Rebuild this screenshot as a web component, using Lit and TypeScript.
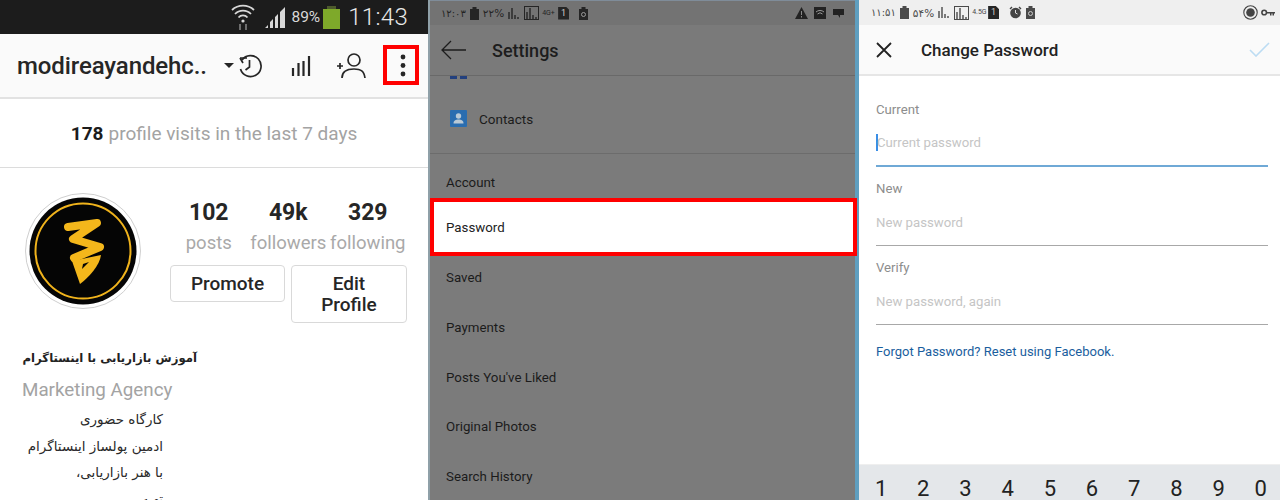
import { LitElement, html, css, svg } from "lit";
import { customElement } from "lit/decorators.js";

const bars = (c: string) => svg`<path d="M1 12V5M4 12V1M7 12V8M10 12v-2" stroke=${c} stroke-width="1.4" fill="none"/>`;

@customElement("app-root")
export class AppRoot extends LitElement {
  static styles = css`
    :host { display: block; width: 1280px; height: 500px; overflow: hidden; font-family: Roboto, "Noto Sans", sans-serif; background: #fff; }
    .page { display: flex; height: 500px; }
    .p1 { width: 428px; flex: none; border-right: 2px solid #8fa0a8; position: relative; display: flex; flex-direction: column; background: #fff; overflow: hidden; box-sizing: content-box; }
    .p2 { width: 425px; flex: none; background: #7b7b7b; display: flex; flex-direction: column; position: relative; z-index: 1; }
    .sep { width: 4px; flex: none; background: #5f9fc0; }
    .p3 { flex: 1; display: flex; flex-direction: column; background: #fff; overflow: hidden; }

    .sb1 { height: 34px; flex: none; background: #1c1c1c; display: flex; align-items: center; justify-content: flex-end; padding-right: 20px; color: #d8d8d8; }
    .sb1 .pct { font-size: 15.5px; margin: 0 3px 0 4px; }
    .sb1 .time { font-size: 24px; font-weight: 300; margin-left: 8px; letter-spacing: .3px; color: #e8e8e8; }
    .batt { width: 17px; height: 20px; background: #7ea92a; position: relative; margin-top: 3px; }
    .batt::before { content: ""; position: absolute; top: -3px; left: 4px; width: 9px; height: 3px; background: #4d5a2c; }
    .sig { margin-left: 10px; }

    .tb1 { height: 63px; flex: none; background: #fafafa; border-bottom: 2px solid #e2e2e2; box-sizing: content-box; display: flex; align-items: center; padding-left: 17px; position: relative; }
    .uname { font-size: 24px; font-weight: 500; color: #262626; width: 205px; white-space: nowrap; letter-spacing: -.1px; }
    .caret { width: 0; height: 0; border-left: 5px solid transparent; border-right: 5px solid transparent; border-top: 5px solid #262626; margin-top: -1px; margin-right: 3px; margin-left: 2px; }
    .tb1 svg { display: block; flex: none; }
    .i-hist { margin-right: 28px; }
    .i-bars { margin-right: 25px; }
    .highlight { position: absolute; left: 383px; top: 11px; width: 36px; height: 40px; border: 4px solid #f00; box-sizing: border-box; display: flex; align-items: center; justify-content: center; padding-left: 4px; }

    .visits { height: 68px; flex: none; border-bottom: 1px solid #dcdcdc; display: flex; align-items: center; justify-content: center; font-size: 19px; color: #a3a3a3; box-sizing: content-box; }
    .visits b { color: #1c1c1c; font-weight: 700; margin-right: 5px; }

    .profile { display: flex; flex: none; padding: 0 0 0 25px; height: 157px; box-sizing: border-box; }
    .avatar { width: 116px; height: 116px; flex: none; margin: 25px 28px 0 0; }
    .right { width: 240px; display: flex; flex-direction: column; margin-top: 32px; }
    .stats { display: flex; }
    .stat { display: flex; flex-direction: column; align-items: center; width: 79.5px; }
    .num { font-size: 23px; font-weight: 700; color: #262626; line-height: 28px; margin-top: -1px; }
    .lbl { font-size: 18.5px; color: #a9a9a9; line-height: 22px; margin-top: 5px; white-space: nowrap; }
    .btns { display: flex; gap: 6px; margin-top: 11px; align-items: flex-start; margin-left: 1px; }
    .btn { border: 1px solid #d9d9d9; border-radius: 4px; background: #fff; display: flex; align-items: center; justify-content: center; text-align: center; font-size: 19px; font-weight: 500; color: #262626; box-sizing: border-box; line-height: 21px; }
    .b1 { width: 115px; height: 37px; }
    .b2 { width: 116px; height: 58px; }

    .bio { padding: 0 0 0 22px; display: flex; flex-direction: column; flex: none; }
    .fa { font-family: "DejaVu Sans", sans-serif; direction: rtl; }
    .bio-title { font-size: 11.7px; font-weight: 700; color: #222; width: 175px; white-space: nowrap; text-align: right; line-height: 20px; margin-top: 23px; }
    .cat { font-size: 18.8px; color: #a3a3a3; line-height: 24px; margin-top: 10px; }
    .line { font-size: 13.5px; color: #2a2a2a; width: 141px; white-space: nowrap; text-align: right; line-height: 26.5px; }
    .lines { margin-top: 4px; }

    .sb2 { height: 25px; flex: none; background: #737373; border-top: 1px solid #7f8c99; box-sizing: border-box; display: flex; align-items: center; padding: 0 11px; color: #252525; font-size: 10px; gap: 4px; }
    .sb3 { height: 25px; flex: none; background: #efefef; box-sizing: border-box; display: flex; align-items: center; padding: 0 5px 0 12px; color: #4a4a4a; font-size: 10px; gap: 4px; }
    .sp { flex: 1; }
    .lang { direction: ltr; unicode-bidi: plaintext; font-family: "DejaVu Sans", sans-serif; white-space: nowrap; }
    .pc { font-size: 10.5px; }
    .t7 { font-size: 7px; line-height: 7px; width: 12px; margin-left: -1px; }
    .s2 { width: 2px; }
    .ml2 { margin-left: 2px; }
    .ml3 { margin-left: 3px; }
    .mln { margin-left: -1px; }
    .sim { width: 11px; height: 13px; background: #252525; clip-path: polygon(0 0, 70% 0, 100% 25%, 100% 100%, 0 100%); display: flex; align-items: center; justify-content: center; font-size: 9px; line-height: 1; color: #ccc; }
    .tb2 { height: 51px; flex: none; background: #7a7a7a; border-bottom: 1px solid #696969; box-sizing: border-box; display: flex; align-items: center; padding-left: 11px; font-size: 18px; font-weight: 500; color: #1d1d1d; }
    .tb2 svg { margin-right: 26px; }
    .peek { height: 2px; flex: none; position: relative; }
    .peek i { display: block; position: absolute; left: 20px; top: 0; width: 17px; height: 3px; background: linear-gradient(90deg, #23407e 0 7px, transparent 7px 10px, #23407e 10px); }
    .contacts { display: flex; align-items: center; height: 76px; flex: none; padding: 6px 0 0 20px; box-sizing: border-box; border-bottom: 1px solid #6c6c6c; font-size: 13.5px; color: #1b1b1b; gap: 12px; }
    .menu { display: flex; flex-direction: column; flex: none; }
    .item { height: 49.7px; display: flex; align-items: center; padding-left: 16px; font-size: 13.3px; color: #1b1b1b; flex: none; box-sizing: border-box; }
    .acct { height: 44px; padding-top: 12px; }
    .active { height: 58px; background: #fff; border: 4px solid #f00; padding: 1px 0 0 12px; width: 427px; color: #222; }
    .after { height: 42px; margin-bottom: 4.6px; }

    .tb3 { height: 51px; flex: none; background: #fafafa; border-bottom: 2px solid #e6e6e6; box-sizing: border-box; display: flex; align-items: center; padding: 0 10px 0 17px; font-size: 17px; font-weight: 500; color: #222; }
    .tb3 .x { margin-right: 29px; }
    .tb3 .ttl { padding-top: 1px; }
    .form { padding: 0 12px 0 17px; flex: 1; display: flex; flex-direction: column; }
    .f-lbl { font-size: 13.2px; color: #8d8d8d; line-height: 16px; margin-top: 26px; }
    .f-lbl.next { margin-top: 14px; }
    .f-in { height: 49px; font-size: 13.2px; color: #c5c5c5; border-bottom: 1px solid #a8a8a8; display: flex; align-items: center; box-sizing: border-box; padding-top: 2px; }
    .f-in.on { border-bottom: 2px solid #6fa9d6; }
    .cursor { width: 2px; height: 17px; background: #3a8ee6; flex: none; margin-right: -1px; }
    .forgot { font-size: 13px; color: #1a5e9e; margin-top: 19px; line-height: 16px; }
    .keys { height: 36px; flex: none; background: #e4e7ea; border-top: 1px solid #efefef; box-sizing: border-box; display: grid; grid-template-columns: repeat(10, 42.2px); padding: 0 0 0 1px; }
    .keys span { font-size: 22px; color: #222; text-align: center; line-height: 22px; padding-top: 13px; }
  `;

  private toolbarIcons() {
    return html`
      <svg class="i-hist" width="26" height="28" viewBox="0 0 26 28" fill="none" stroke="#262626" stroke-width="1.7"><path d="M3 6 L6 11 M3 6 H10"/><path d="M5 8 A10.5 10.5 0 1 1 3.5 17"/><path d="M12.5 8v7l-4 3"/></svg>
      <svg class="i-bars" width="20" height="22" viewBox="0 0 20 22" fill="none" stroke="#262626" stroke-width="2.2"><path d="M2 21v-8M7.5 21V8M12.5 21V6M18 21V1"/></svg>
      <svg width="30" height="26" viewBox="0 0 30 26" fill="none" stroke="#262626" stroke-width="1.7"><circle cx="18" cy="7" r="6"/><path d="M6 25c0-7 5-9 12-9s10 2 11 9"/><path d="M1 13h6M4 10v6"/></svg>
      <div class="highlight"><svg width="6" height="23" viewBox="0 0 6 23" fill="#262626"><circle cx="3" cy="3" r="2.4"/><circle cx="3" cy="11.5" r="2.4"/><circle cx="3" cy="20" r="2.4"/></svg></div>`;
  }

  private logo() {
    return html`<svg class="avatar" viewBox="0 0 116 116">
      <circle cx="58" cy="58" r="57.5" fill="#fff" stroke="#cfcfcf"/>
      <circle cx="58" cy="58" r="53.5" fill="#050505"/>
      <circle cx="58" cy="58" r="47.5" fill="none" stroke="#f0b31c" stroke-width="2"/>
      <path d="M43 34 L72 30 L48 46 L75 54 L49 65" fill="none" stroke="#f4b71b" stroke-width="8" stroke-linecap="round" stroke-linejoin="round"/>
      <path d="M47 68 L76 62 C 75 72 64 84 55 91 Z" fill="#f4b71b"/>
      <path d="M57 76 L64 69 L58 71 Z" fill="#050505"/>
    </svg>`;
  }

  private status2() {
    return html`
      <span class="lang">۱۲:۰۳</span>
      <svg width="9" height="13" viewBox="0 0 9 13"><path d="M0 2h9v11H0z" fill="#252525"/><path d="M2.5 0h4v2h-4z" fill="#252525"/></svg>
      <span class="lang pc">۲۲%</span>
      <svg width="12" height="13" viewBox="0 0 12 13">${bars("#252525")}</svg>
      <svg width="15" height="14" viewBox="0 0 15 14"><rect x=".5" y=".5" width="14" height="13" fill="none" stroke="#252525"/><g transform="translate(2 1)">${bars("#252525")}</g></svg>
      <span class="t7">4G+</span>
      <span class="sim">1</span>
      <span class="s2"></span>
      <svg width="9" height="13" viewBox="0 0 9 13"><path d="M0 2h9v11H0z" fill="#252525"/><path d="M2.5 0h4v2h-4z" fill="#252525"/><circle cx="4.5" cy="7.5" r="2" fill="none" stroke="#999"/></svg>
      <span class="sp"></span>
      <svg width="13" height="12" viewBox="0 0 13 12"><path d="M6.5 0L13 12H0z" fill="#222"/><path d="M6.5 4v4M6.5 9v1.5" stroke="#888"/></svg>
      <svg class="ml2" width="12" height="12" viewBox="0 0 12 12"><rect width="12" height="12" fill="#222"/><path d="M2 5a6 6 0 0 1 8 0M3.5 7a3.5 3.5 0 0 1 5 0" stroke="#999" fill="none"/></svg>
      <svg class="ml3" width="11" height="9" viewBox="0 0 11 9"><path d="M0 0h11v6H7v3L5 6H0z" fill="#222"/></svg>`;
  }

  private status3() {
    return html`
      <span class="lang">۱۱:۵۱</span>
      <svg width="9" height="13" viewBox="0 0 9 13"><path d="M0 2h9v11H0z" fill="#4a4a4a"/><path d="M2.5 0h4v2h-4z" fill="#4a4a4a"/></svg>
      <span class="lang pc">۵۴%</span>
      <svg width="12" height="13" viewBox="0 0 12 13">${bars("#4a4a4a")}</svg>
      <svg width="15" height="14" viewBox="0 0 15 14"><rect x=".5" y=".5" width="14" height="13" fill="none" stroke="#4a4a4a"/><g transform="translate(2 1)">${bars("#4a4a4a")}</g></svg>
      <span class="t7">4.5G</span>
      <span class="sim">1</span>
      <span class="s2"></span>
      <svg width="13" height="13" viewBox="0 0 13 13"><circle cx="6.5" cy="7" r="5.3" fill="#444"/><path d="M1 3l2-2M12 3l-2-2" stroke="#444" stroke-width="1.4"/><path d="M6.5 4v3l2 1" stroke="#ddd" fill="none"/></svg>
      <svg width="9" height="13" viewBox="0 0 9 13"><path d="M0 2h9v11H0z" fill="#4a4a4a"/><path d="M2.5 0h4v2h-4z" fill="#4a4a4a"/><circle cx="4.5" cy="7.5" r="2" fill="none" stroke="#ccc"/></svg>
      <span class="sp"></span>
      <svg width="15" height="15" viewBox="0 0 15 15"><circle cx="7.5" cy="7.5" r="6.7" fill="none" stroke="#444" stroke-width="1.1"/><circle cx="7.5" cy="7.5" r="4.3" fill="#444"/></svg>
      <svg class="mln" width="14" height="7" viewBox="0 0 14 7"><circle cx="3.2" cy="3.5" r="2.3" fill="none" stroke="#444" stroke-width="1.6"/><path d="M5 3h9v1.5h-1v2h-1.5v-2h-1v2H9v-2H5z" fill="#444"/></svg>`;
  }

  render() {
    const digits = ["1", "2", "3", "4", "5", "6", "7", "8", "9", "0"];
    const items = ["Saved", "Payments", "Posts You've Liked", "Original Photos", "Search History"];
    return html`<div class="page">
      <section class="p1">
        <div class="sb1">
          <svg width="24" height="28" viewBox="0 0 24 28" fill="none" stroke="#d8d8d8" stroke-width="1.8"><path d="M1 7a16 16 0 0 1 22 0M4 11a11 11 0 0 1 16 0M7.5 14.5a6 6 0 0 1 9 0"/><circle cx="12" cy="18" r="1.6" fill="#d8d8d8" stroke="none"/><path d="M9 21v6M15 21v6" stroke="#888" stroke-width="1.5"/></svg>
          <svg class="sig" width="22" height="24" viewBox="0 0 22 24" fill="#d8d8d8"><path d="M0 23l3-3v3zM5 23v-6l3-3v9zM10 23V12l3-3v14zM15 23V7l5-5v21z"/></svg>
          <span class="pct">89%</span>
          <div class="batt"></div>
          <span class="time">11:43</span>
        </div>
        <div class="tb1">
          <div class="uname">modireayandehc..</div>
          <div class="caret"></div>
          ${this.toolbarIcons()}
        </div>
        <div class="visits"><b>178</b> profile visits in the last 7 days</div>
        <div class="profile">
          ${this.logo()}
          <div class="right">
            <div class="stats">
              <div class="stat"><span class="num">102</span><span class="lbl">posts</span></div>
              <div class="stat"><span class="num">49k</span><span class="lbl">followers</span></div>
              <div class="stat"><span class="num">329</span><span class="lbl">following</span></div>
            </div>
            <div class="btns">
              <div class="btn b1">Promote</div>
              <div class="btn b2">Edit<br />Profile</div>
            </div>
          </div>
        </div>
        <div class="bio">
          <div class="bio-title fa">آموزش بازاریابی با اینستاگرام</div>
          <div class="cat">Marketing Agency</div>
          <div class="lines">
            <div class="line fa">کارگاه حضوری</div>
            <div class="line fa">ادمین پولساز اینستاگرام</div>
            <div class="line fa">با هنر بازاریابی،</div>
            <div class="line fa">تهیه و</div>
          </div>
        </div>
      </section>

      <section class="p2">
        <div class="sb2">${this.status2()}</div>
        <div class="tb2">
          <svg width="25" height="20" viewBox="0 0 25 20" fill="none" stroke="#1d1d1d" stroke-width="1.3"><path d="M25 10H1M10 1l-9 9 9 9"/></svg>
          Settings
        </div>
        <div class="peek"><i></i></div>
        <div class="contacts">
          <svg width="17" height="17" viewBox="0 0 17 17"><rect width="17" height="17" rx="1" fill="#2a6db0"/><circle cx="8.5" cy="6" r="2.7" fill="#b9c9d6"/><path d="M3.5 13.5c0-3 2-4 5-4s5 1 5 4z" fill="#b9c9d6"/></svg>
          <span>Contacts</span>
        </div>
        <div class="menu">
          <div class="item acct">Account</div>
          <div class="item active">Password</div>
          ${items.map((t, i) => html`<div class="item ${i === 0 ? "after" : ""}">${t}</div>`)}
        </div>
      </section>

      <div class="sep"></div>

      <section class="p3">
        <div class="sb3">${this.status3()}</div>
        <div class="tb3">
          <svg class="x" width="16" height="16" viewBox="0 0 16 16" stroke="#222" stroke-width="1.8"><path d="M1 1l14 14M15 1L1 15"/></svg>
          <span class="ttl">Change Password</span>
          <span class="sp"></span>
          <svg width="21" height="15" viewBox="0 0 21 15" fill="none" stroke="#bcdcf3" stroke-width="1.6"><path d="M1 8l6 6L20 1"/></svg>
        </div>
        <div class="form">
          <div class="f-lbl">Current</div>
          <div class="f-in on"><span class="cursor"></span>Current password</div>
          <div class="f-lbl next">New</div>
          <div class="f-in">New password</div>
          <div class="f-lbl next">Verify</div>
          <div class="f-in">New password, again</div>
          <div class="forgot">Forgot Password? Reset using Facebook.</div>
        </div>
        <div class="keys">${digits.map((d) => html`<span>${d}</span>`)}</div>
      </section>
    </div>`;
  }
}
